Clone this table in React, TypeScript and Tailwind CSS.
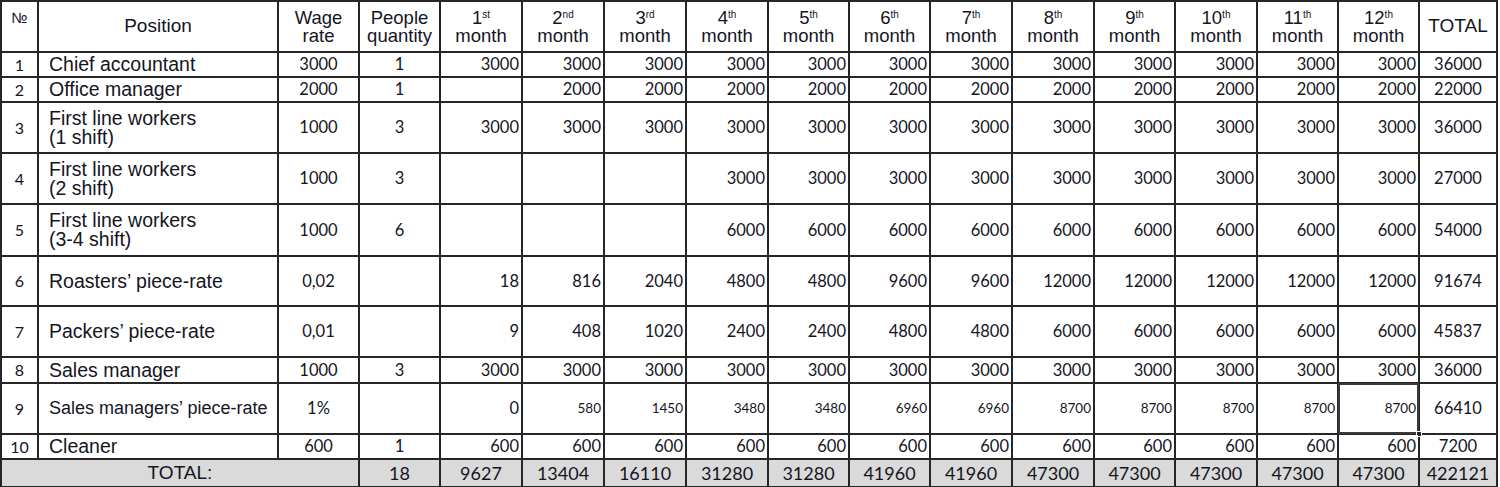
import React from "react";

const arial = "font-['Liberation_Sans',Arial,sans-serif]";
const num = "font-['Lato','Open_Sans',sans-serif]";

type Row = {
  n: number;
  pos: string[];
  wage: string;
  people: string;
  months: (string | number)[];
  total: string;
  small?: boolean;
};

const rep = (v: number | string, c: number) => Array(c).fill(v);

const rows: Row[] = [
  { n: 1, pos: ["Chief accountant"], wage: "3000", people: "1", months: rep(3000, 12), total: "36000" },
  { n: 2, pos: ["Office manager"], wage: "2000", people: "1", months: ["", ...rep(2000, 11)], total: "22000" },
  { n: 3, pos: ["First line workers", "(1 shift)"], wage: "1000", people: "3", months: rep(3000, 12), total: "36000" },
  { n: 4, pos: ["First line workers", "(2 shift)"], wage: "1000", people: "3", months: ["", "", "", ...rep(3000, 9)], total: "27000" },
  { n: 5, pos: ["First line workers", "(3-4 shift)"], wage: "1000", people: "6", months: ["", "", "", ...rep(6000, 9)], total: "54000" },
  { n: 6, pos: ["Roasters\u2019 piece-rate"], wage: "0,02", people: "", months: [18, 816, 2040, 4800, 4800, 9600, 9600, 12000, 12000, 12000, 12000, 12000], total: "91674" },
  { n: 7, pos: ["Packers\u2019 piece-rate"], wage: "0,01", people: "", months: [9, 408, 1020, 2400, 2400, 4800, 4800, 6000, 6000, 6000, 6000, 6000], total: "45837" },
  { n: 8, pos: ["Sales manager"], wage: "1000", people: "3", months: rep(3000, 12), total: "36000" },
  { n: 9, pos: ["Sales managers\u2019 piece-rate"], wage: "1%", people: "", months: [0, 580, 1450, 3480, 3480, 6960, 6960, 8700, 8700, 8700, 8700, 8700], total: "66410", small: true },
  { n: 10, pos: ["Cleaner"], wage: "600", people: "1", months: rep(600, 12), total: "7200" },
];

const totals = ["9627", "13404", "16110", "31280", "31280", "41960", "41960", "47300", "47300", "47300", "47300", "47300"];
const sufs = ["st", "nd", "rd", "th", "th", "th", "th", "th", "th", "th", "th", "th"];

export default function App() {
  return (
    <div className="bg-white w-[1500px] h-[487px] overflow-hidden">
      <div className="grid w-fit gap-[2px] p-[2px] bg-[#262626] text-[#15151f] grid-cols-[35px_238px_79px_79px_80px_80px_80px_80px_79px_79px_80px_80px_79px_80px_79px_79px_76px] grid-rows-[49px_23px_23px_49px_49px_50px_48px_49px_24px_49px_23px_26px]">
        {/* header */}
        <div className={`bg-white flex justify-center items-start pt-[5px] text-[15px] ${arial}`}>№</div>
        <div className={`bg-white flex justify-center items-center text-[19px] ${arial}`}>Position</div>
        <div className={`bg-white flex justify-center items-center text-center text-[18.5px] leading-[18px] ${arial}`}>
          <p>
            Wage
            <br />
            rate
          </p>
        </div>
        <div className={`bg-white flex justify-center items-center text-center text-[18.5px] leading-[18px] ${arial}`}>
          <p>
            People
            <br />
            quantity
          </p>
        </div>
        {sufs.map((s, i) => (
          <div key={i} className={`bg-white flex justify-center items-center text-center text-[18.5px] leading-[18px] ${arial}`}>
            <p>
              {i + 1}
              <sup className="text-[10px] -top-[6px]">{s}</sup>
              <br />
              month
            </p>
          </div>
        ))}
        <div className={`bg-white flex justify-center items-center text-[19px] ${arial}`}>TOTAL</div>

        {/* body */}
        {rows.map((r) => (
          <React.Fragment key={r.n}>
            <div className={`bg-white flex justify-center items-center text-[16px] ${num}`}>{r.n}</div>
            <div
              className={`bg-white flex items-center pl-[10px] leading-[19px] ${arial} ${
                r.small ? "text-[18px]" : "text-[19.5px]"
              }`}
            >
              <p>
                {r.pos[0]}
                {r.pos[1] && (
                  <>
                    <br />
                    {r.pos[1]}
                  </>
                )}
              </p>
            </div>
            <div className={`bg-white flex justify-center items-center text-[16.5px] ${num}`}>{r.wage}</div>
            <div className={`bg-white flex justify-center items-center text-[16.5px] ${num}`}>{r.people}</div>
            {r.months.map((m, i) => (
              <div
                key={i}
                className={`relative bg-white flex justify-end items-center pr-[2px] ${num} ${
                  r.small && m !== 0 ? "text-[13.5px]" : "text-[16.5px]"
                }`}
              >
                {m}
                {r.small && i === 11 && (
                  <>
                    <div className="absolute -inset-[1px] border-2 border-[#3a3a3a]" />
                    <div className="absolute -right-[4px] -bottom-[4px] w-[6px] h-[6px] bg-[#262626] border border-white" />
                  </>
                )}
              </div>
            ))}
            <div className={`bg-white flex justify-center items-center text-[16.5px] ${num}`}>{r.total}</div>
          </React.Fragment>
        ))}

        {/* totals */}
        <div className={`col-span-3 bg-[#dadada] flex justify-center items-center text-[19px] ${arial}`}>TOTAL:</div>
        <div className={`bg-[#dadada] flex justify-center items-center text-[18px] ${num}`}>18</div>
        {totals.map((t, i) => (
          <div key={i} className={`bg-[#dadada] flex justify-center items-center text-[18px] ${num}`}>
            {t}
          </div>
        ))}
        <div className={`bg-[#dadada] flex justify-center items-center text-[18px] ${num}`}>422121</div>
      </div>
    </div>
  );
}
